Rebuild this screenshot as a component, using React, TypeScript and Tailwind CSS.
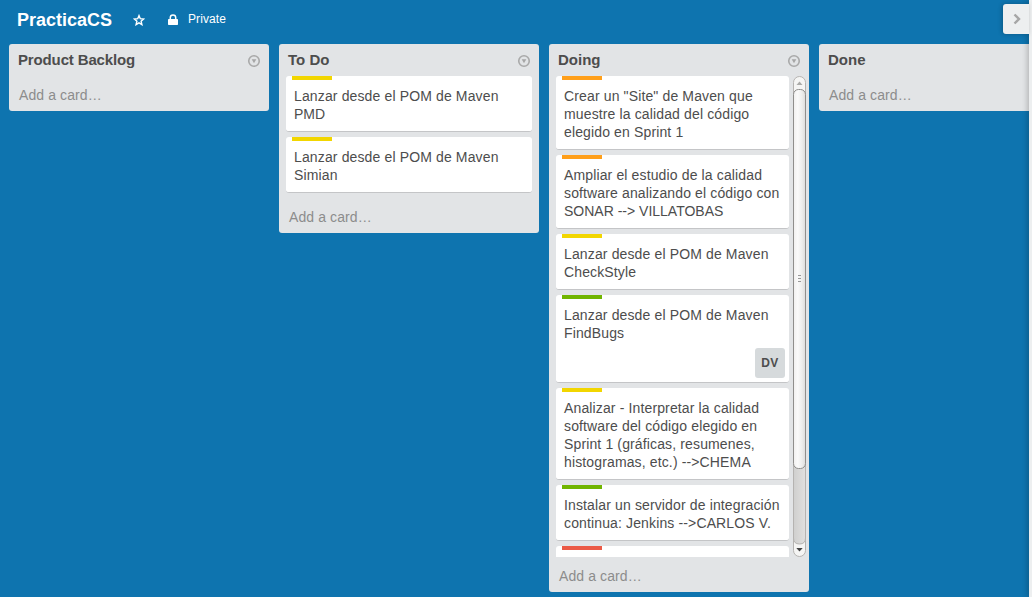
import React from "react";

type Label = "yellow" | "orange" | "green" | "red";
type CardData = { label: Label; lines: string[]; member?: string };

const labelColors: Record<Label, string> = {
  yellow: "bg-[#f2d600]",
  orange: "bg-[#ff9f1a]",
  green: "bg-[#70b500]",
  red: "bg-[#eb5a46]",
};

const todo: CardData[] = [
  { label: "yellow", lines: ["Lanzar desde el POM de Maven", "PMD"] },
  { label: "yellow", lines: ["Lanzar desde el POM de Maven", "Simian"] },
];

const doing: CardData[] = [
  { label: "orange", lines: ['Crear un "Site" de Maven que', "muestre la calidad del código", "elegido en Sprint 1"] },
  { label: "orange", lines: ["Ampliar el estudio de la calidad", "software analizando el código con", "SONAR --> VILLATOBAS"] },
  { label: "yellow", lines: ["Lanzar desde el POM de Maven", "CheckStyle"] },
  { label: "green", lines: ["Lanzar desde el POM de Maven", "FindBugs"], member: "DV" },
  {
    label: "yellow",
    lines: ["Analizar - Interpretar la calidad", "software del código elegido en", "Sprint 1 (gráficas, resumenes,", "histogramas, etc.) -->CHEMA"],
  },
  { label: "green", lines: ["Instalar un servidor de integración", "continua: Jenkins -->CARLOS V."] },
  { label: "red", lines: ["", ""] },
];

function Card({ card }: { card: CardData }) {
  return (
    <div className="mb-[5px] shrink-0 rounded-[3px] border-b border-[#c4c5c7] bg-white">
      <div className={`ml-1.5 h-1 w-10 ${labelColors[card.label]}`} />
      <div className="px-2 pt-[7px] pb-2">
        {card.lines.map((line, i) => (
          <p
            key={i}
            className={`h-[18px] whitespace-nowrap ${line === line.toUpperCase() ? "tracking-normal" : "tracking-[0.135px]"}`}
          >
            {line}
          </p>
        ))}
      </div>
      {card.member && (
        <div className="-mt-0.5 mr-1 mb-1 ml-auto flex size-[30px] items-center justify-center rounded-[3px] bg-[#d6dadc] text-[12px] font-bold tracking-[0.3px]">
          {card.member}
        </div>
      )}
    </div>
  );
}

function ListMenuIcon() {
  return (
    <svg width="14" height="14" viewBox="0 0 14 14" fill="none">
      <circle cx="7" cy="7" r="5.25" stroke="#a9a9a9" strokeWidth="1.6" />
      <path d="M4.7 5.2h4.6L7 9.3z" fill="#a6a6a6" />
    </svg>
  );
}

function Scrollbar() {
  return (
    <svg width="13" height="481" viewBox="0 0 13 481" className="shrink-0" fill="none">
      <defs>
        <linearGradient id="track">
          <stop offset="0" stopColor="#cfcfce" />
          <stop offset="1" stopColor="#e1e0df" />
        </linearGradient>
        <linearGradient id="thumb">
          <stop offset="0" stopColor="#f0efee" />
          <stop offset=".35" stopColor="#fafafa" />
          <stop offset=".7" stopColor="#ededec" />
          <stop offset="1" stopColor="#dddcdb" />
        </linearGradient>
      </defs>
      <rect x=".5" y=".5" width="12" height="480" rx="6" fill="#f5f5f4" stroke="#b5b3b1" />
      <path d="M.5 380h12v82q0 6-6 6t-6-6z" fill="url(#track)" stroke="#b5b3b1" />
      <rect x=".5" y="13.5" width="12" height="379" rx="5" fill="url(#thumb)" stroke="#8f8e8c" />
      <path d="M3.5 9h6l-3-3.4z" fill="#aaaaa8" />
      <path d="M3.3 472h6.4l-3.2 3.6z" fill="#444" />
      <path d="M5 199.5h3M5 202.5h3M5 205.5h3" stroke="#999" />
    </svg>
  );
}

function AddCard() {
  return <div className="h-[35px] shrink-0 px-2.5 pt-2.5 tracking-[0.1px] text-[#8c8c8c]">Add a card…</div>;
}

function List({ title, children }: { title: string; children?: React.ReactNode }) {
  return (
    <section className="w-[260px] shrink-0 rounded-[3px] bg-[#e2e4e6]">
      <header className="flex h-8 items-start justify-between pt-[7px] pr-2 pl-[9px]">
        <h2 className={`text-[15px] leading-[18px] font-bold ${title.length > 6 ? "tracking-[-0.14px]" : "tracking-normal"}`}>
          {title}
        </h2>
        <div className="pt-[2.7px]">
          <ListMenuIcon />
        </div>
      </header>
      {children}
      <AddCard />
    </section>
  );
}

export default function App() {
  return (
    <div className="flex h-[597px] w-[1032px] overflow-hidden bg-[#0e74af] font-['Liberation_Sans',Arial,sans-serif] text-[14px] leading-[18px] text-[#4d4d4d]">
      <main className="flex min-w-0 flex-1 flex-col overflow-hidden">
        <header className="flex h-11 shrink-0 text-white">
          <h1 className="ml-[17px] w-[116px] pt-2.5 text-[18px] leading-5 font-bold">PracticaCS</h1>
          <svg width="12" height="12" viewBox="0 0 12 12" className="mt-3.5" fill="none" stroke="white" strokeWidth="1.4">
            <path d="M6 1.6 7.3 4.7 10.6 5 8.1 7.2 8.9 10.6 6 8.8 3.1 10.6 3.9 7.2 1.4 5 4.7 4.7z" />
          </svg>
          <svg width="10" height="11" viewBox="0 0 10 11" className="mt-3.5 ml-[23px]" fill="none">
            <path d="M2.3 6V3.6a2.7 2.7 0 0 1 5.4 0V6" stroke="white" strokeWidth="1.5" />
            <rect y="5" width="10" height="6" rx=".7" fill="white" />
          </svg>
          <span className="ml-2.5 pt-2.5 text-[12px] leading-[18px] tracking-[0.08px]">Private</span>
        </header>
        <div className="flex items-start gap-2.5 pl-[9px]">
          <List title="Product Backlog" />
          <List title="To Do">
            <div className="flex flex-col px-[7px]">
              {todo.map((card, i) => (
                <Card key={i} card={card} />
              ))}
            </div>
          </List>
          <List title="Doing">
            <div className="flex h-[481px] gap-1 overflow-hidden pr-[3px] pl-[7px]">
              <div className="flex w-[233px] flex-col">
                {doing.map((card, i) => (
                  <Card key={i} card={card} />
                ))}
              </div>
              <Scrollbar />
            </div>
          </List>
          <List title="Done" />
        </div>
      </main>
      <aside className="relative w-[3px] shrink-0 bg-[#edeff0] shadow-[0_0_6px_rgba(0,0,0,0.45)]">
        <button className="absolute top-1 right-[3px] flex h-[30px] w-[26px] items-center justify-center rounded-l-[3px] bg-[#edeff0] shadow-[-1px_0_4px_rgba(0,0,0,0.25)]">
          <svg width="8" height="12" viewBox="0 0 8 12" fill="none" className="ml-0.5">
            <path d="M1.5 1.5 6 6 1.5 10.5" stroke="#a6a6a6" strokeWidth="2.4" />
          </svg>
        </button>
      </aside>
    </div>
  );
}
